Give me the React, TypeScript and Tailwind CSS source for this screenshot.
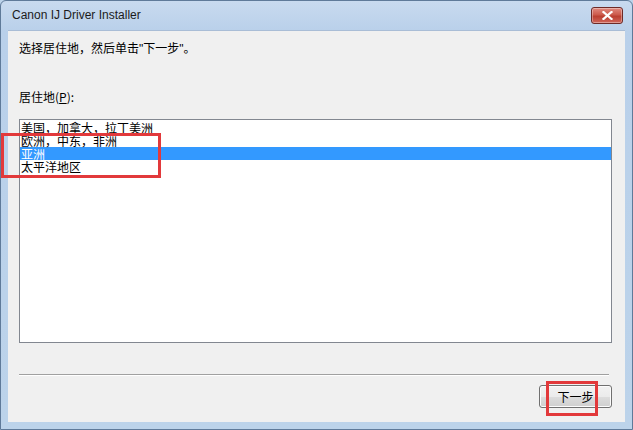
import React from "react";

export default function App() {
  const items = ["美国，加拿大，拉丁美洲", "欧洲，中东，非洲", "亚洲", "太平洋地区"];
  const cjk = { fontFamily: '"Noto Sans CJK SC", "Noto Sans", sans-serif' };
  const latin = { fontFamily: '"Liberation Sans", sans-serif' };
  return (
    <div className="relative w-[633px] h-[430px] overflow-hidden bg-[#bcd3ea]">
      <div className="relative w-full h-full rounded-t-[6px] border border-[#5f7a99] bg-[linear-gradient(#c8daef,#b9d0ea_30px,#bcd3ea)] flex flex-col">
        {/* title bar */}
        <div className="h-[29px] flex items-center pl-[11px] pr-[9px] shrink-0">
          <span className="text-[12px] text-[#1b1b1b] leading-none mt-[-1px]" style={{ fontFamily: '"Liberation Sans", sans-serif' }}>
            Canon IJ Driver Installer
          </span>
          <div className="ml-auto mt-[-1px] w-[32px] h-[17px] rounded-[3px] border border-[#6d2a27] bg-[linear-gradient(#e08a80,#cc5a4b_45%,#bb3f30_55%,#d0665a)] flex items-center justify-center shadow-[inset_0_0_0_1px_rgba(255,255,255,0.35)]">
            <svg width="11" height="9" viewBox="0 0 11 9">
              <path d="M1.5 1 L9.5 8 M9.5 1 L1.5 8" stroke="#fff" strokeWidth="2.2" strokeLinecap="square" />
            </svg>
          </div>
        </div>
        {/* client */}
        <div className="mx-[7px] h-[392px] bg-[#f0f0f0] border-t border-[#a9bdd6] flex flex-col pl-[11px] pr-[13px] text-[12px] text-black" style={cjk}>
          <div className="mt-[10px] h-[13px] leading-[13px]">
            选择居住地，然后单击<span style={latin}>"</span>下一步<span style={latin}>"</span>。
          </div>
          <div className="mt-[36px] h-[13px] leading-[13px]">
            居住地(<span className="underline">P</span>):
          </div>
          <div className="mt-[16px] h-[224px] border border-[#828790] bg-white pt-[1px]">
            {items.map((t, i) => (
              <div
                key={t}
                className={
                  "h-[13px] leading-[13px] pl-[1px] " + (i === 2 ? "bg-[#3399ff] text-white" : "text-black")
                }
              >
                {t}
              </div>
            ))}
          </div>
          <div className="mt-[31px] mr-[3px] h-[2px] border-t border-[#a0a0a0] border-b border-b-white"></div>
          <div className="mt-[9px] flex justify-end">
            <div className="w-[73px] h-[23px] rounded-[3px] border border-[#707070] bg-[linear-gradient(#f2f2f2,#ebebeb_50%,#dddddd_50%,#cfcfcf)] shadow-[inset_0_0_0_1px_#fcfcfc] flex items-center justify-center leading-none">
              下一步
            </div>
          </div>
        </div>
      </div>
      {/* red highlight boxes */}
      <div className="absolute left-[1px] top-[133px] w-[160px] h-[45px] border-[3px] border-[#e2393b]"></div>
      <div className="absolute left-[546px] top-[381px] w-[52px] h-[35px] border-[3px] border-[#e2393b]"></div>
    </div>
  );
}
